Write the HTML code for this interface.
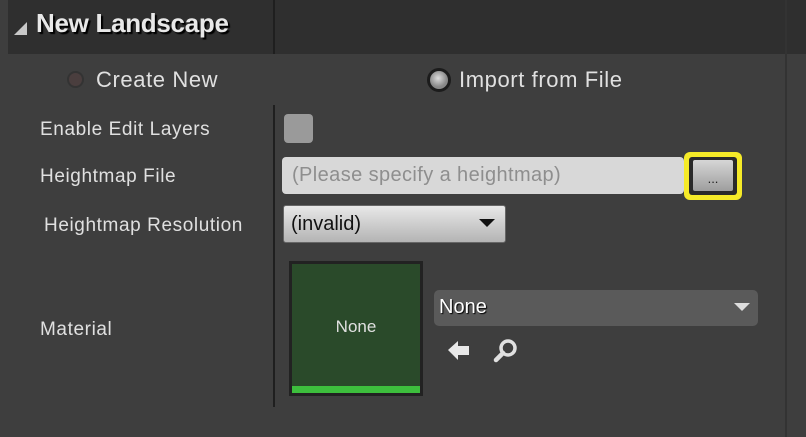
<!DOCTYPE html>
<html><head><style>
body{margin:0;width:806px;height:437px;background:#3e3e3e;font-family:"Liberation Sans",sans-serif;position:relative;overflow:hidden}
div,span{position:absolute;box-sizing:border-box}
.lbl{color:#e0e0e0;font-size:19px;letter-spacing:0.6px}
</style></head><body>
<div style="left:8px;top:0;width:798px;height:54px;background:#2f2f2f"></div>
<div style="left:273px;top:0;width:2px;height:54px;background:#1f1f1f"></div>
<div style="left:785px;top:0;width:2px;height:437px;background:#333"></div>
<div style="left:14px;top:22px;width:0;height:0;border-left:13px solid transparent;border-bottom:13px solid #c8c8c8"></div>
<div style="left:36px;top:8px;color:#e8e8e8;font-size:26px;font-weight:bold;letter-spacing:-0.3px;text-shadow:2px 2px 1px #000">New Landscape</div>
<div style="left:67px;top:71px;width:17px;height:17px;border-radius:50%;background:#4a3e3e;border:2px solid #333"></div>
<div class="lbl" style="left:96px;top:67px;font-size:22px">Create New</div>
<div style="left:427px;top:68px;width:24px;height:24px;border-radius:50%;background:radial-gradient(circle at 45% 40%,#ddd,#888 60%);border:3px solid #1c1c1c"></div>
<div class="lbl" style="left:459px;top:67px;font-size:22px">Import from File</div>
<div style="left:273px;top:105px;width:2px;height:302px;background:#1f1f1f"></div>
<div class="lbl" style="left:40px;top:119px">Enable Edit Layers</div>
<div style="left:284px;top:114px;width:29px;height:29px;border-radius:4px;background:#9a9a9a"></div>
<div class="lbl" style="left:40px;top:166px">Heightmap File</div>
<div style="left:282px;top:157px;width:402px;height:37px;border-radius:4px;background:#d8d8d8;color:#8e8e8e;font-size:20px;letter-spacing:0.4px;padding:7px 0 0 10px">(Please specify a heightmap)</div>
<div style="left:684px;top:152px;width:58px;height:48px;border-radius:6px;background:#f5ea28"></div>
<div style="left:689px;top:157px;width:48px;height:38px;border-radius:3px;background:#2a2a2a"></div>
<div style="left:693px;top:160px;width:40px;height:31px;border-radius:2px;background:linear-gradient(#d6d6d6,#9e9e9e);color:#222;font-size:13px;text-align:center;padding-top:11px">...</div>
<div class="lbl" style="left:44px;top:215px">Heightmap Resolution</div>
<div style="left:283px;top:205px;width:223px;height:38px;border-radius:3px;background:linear-gradient(#e8e8e8,#b4b4b4);border:1px solid #666;color:#111;font-size:20px;padding:7px 0 0 7px">(invalid)</div>
<div style="left:479px;top:219px;width:0;height:0;border-left:8px solid transparent;border-right:8px solid transparent;border-top:8px solid #111"></div>
<div class="lbl" style="left:40px;top:319px">Material</div>
<div style="left:289px;top:261px;width:134px;height:135px;background:#222"></div>
<div style="left:292px;top:264px;width:128px;height:129px;background:#2a4a2a"></div>
<div style="left:292px;top:386px;width:128px;height:7px;background:#3dbf3d"></div>
<div style="left:292px;top:317px;width:128px;text-align:center;color:#e0e0e0;font-size:17px">None</div>
<div style="left:434px;top:290px;width:324px;height:36px;border-radius:5px;background:#5a5a5a;color:#fff;font-size:20px;padding:6px 0 0 5px;text-shadow:1px 1px 1px #000">None</div>
<div style="left:734px;top:303px;width:0;height:0;border-left:8px solid transparent;border-right:8px solid transparent;border-top:8px solid #ddd"></div>
<svg style="position:absolute;left:446px;top:338px" width="26" height="26" viewBox="0 0 26 26"><path d="M2 12 L12 3 L12 8 L23 8 L23 17 L12 17 L12 22 Z" fill="#e8e8e8"/></svg>
<svg style="position:absolute;left:492px;top:338px" width="28" height="26" viewBox="0 0 28 26"><circle cx="16" cy="10" r="7" fill="none" stroke="#e0e0e0" stroke-width="3.5"/><path d="M11 15 L4 22" stroke="#e0e0e0" stroke-width="4.5" stroke-linecap="round"/></svg>
</body></html>
